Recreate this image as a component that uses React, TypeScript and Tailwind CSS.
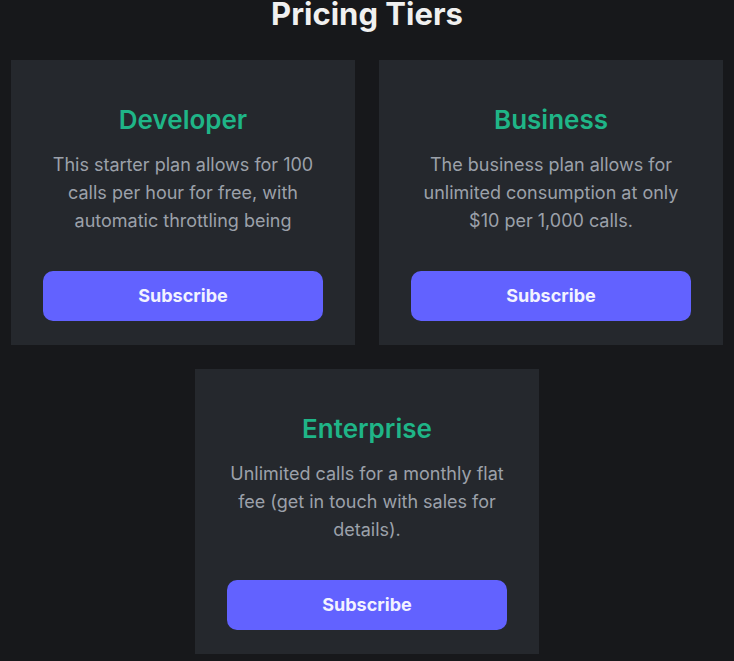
import React from 'react';

interface Tier {
  name: string;
  description: string;
}

const tiers: Tier[] = [
  {
    name: 'Developer',
    description:
      'This starter plan allows for 100 calls per hour for free, with automatic throttling being applied once the limit is reached.',
  },
  {
    name: 'Business',
    description: 'The business plan allows for unlimited consumption at only $10 per 1,000 calls.',
  },
  {
    name: 'Enterprise',
    description: 'Unlimited calls for a monthly flat fee (get in touch with sales for details).',
  },
];

function TierCard({ tier }: { tier: Tier }) {
  return (
    <div className="w-[344px] h-[285px] bg-[#25282d] px-8 pt-[39px] pb-6 flex flex-col items-center text-center">
      <h3 className="text-[26px] leading-[42px] font-semibold text-[#1fb587]">{tier.name}</h3>
      <p className="mt-[10px] h-[84px] overflow-hidden text-lg text-[#9ca1aa]">{tier.description}</p>
      <button
        type="button"
        className="mt-auto w-full h-[50px] rounded-[10px] bg-[#6262ff] text-lg font-bold text-[#f2f2ff]"
      >
        Subscribe
      </button>
    </div>
  );
}

export default function App() {
  return (
    <div className="min-h-[661px] bg-[#17181b] font-['Inter','Liberation_Sans',sans-serif] overflow-hidden">
      <h1 className="text-[31px] leading-[40px] -mt-[6px] font-bold text-[#f0f0f0] text-center">Pricing Tiers</h1>
      <div className="mt-[26px] flex flex-wrap justify-center gap-6 px-[11px]">
        {tiers.map((tier) => (
          <TierCard key={tier.name} tier={tier} />
        ))}
      </div>
    </div>
  );
}
